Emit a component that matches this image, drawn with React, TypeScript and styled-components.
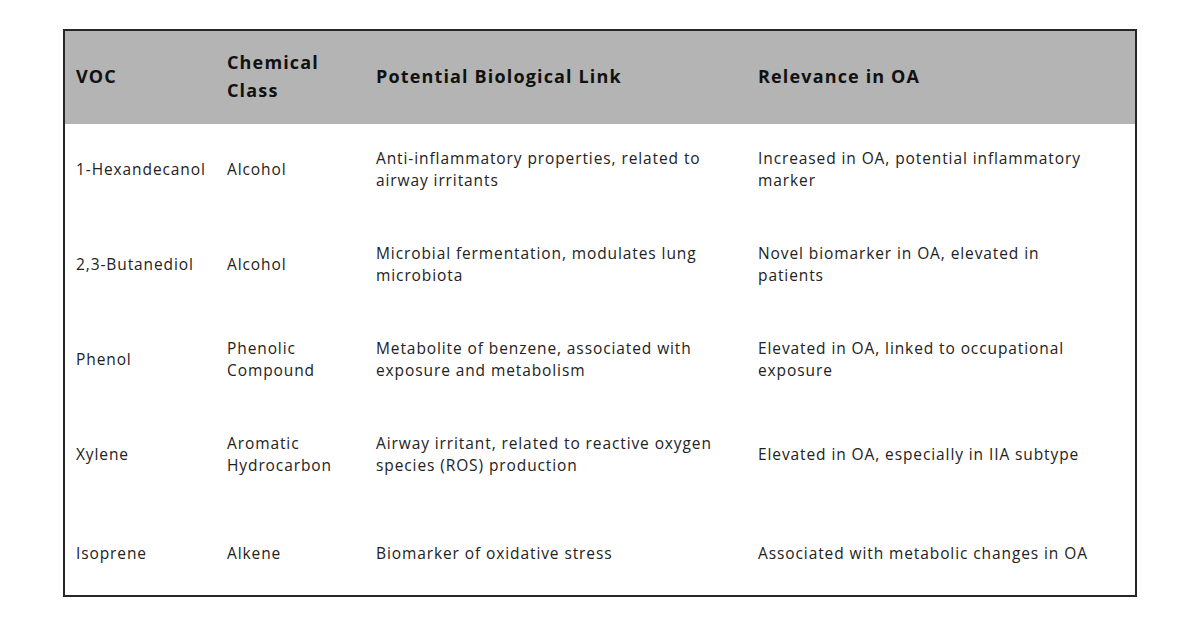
import React from "react";
import styled, { createGlobalStyle } from "styled-components";

const Global = createGlobalStyle`
  html, body { margin: 0; padding: 0; background: #ffffff; }
  body { font-family: "Open Sans", "Liberation Sans", sans-serif; }
`;

const Page = styled.div`
  width: 1200px;
  height: 627px;
  padding: 29px 0 0 63px;
  box-sizing: border-box;
  background: #ffffff;
`;

const Table = styled.table`
  width: 1074px;
  border: 2px solid #262626;
  border-collapse: collapse;
  table-layout: fixed;
`;

const Col = styled.col<{ $w: number }>`
  width: ${(p) => p.$w}px;
`;

const HeadRow = styled.tr`
  background: #b3b4b3;
  height: 94px;
`;

const Th = styled.th`
  padding: 0 10px 4px 11px;
  text-align: left;
  vertical-align: middle;
  font-size: 18px;
  font-weight: 700;
  letter-spacing: 1.15px;
  line-height: 28px;
  color: #111111;
`;

const Row = styled.tr<{ $h: number; $shift: number }>`
  height: ${(p) => p.$h}px;
  & > td {
    padding-top: ${(p) => (p.$shift > 0 ? p.$shift * 2 : 0)}px;
    padding-bottom: ${(p) => (p.$shift < 0 ? -p.$shift * 2 : 0)}px;
  }
`;

const Td = styled.td<{ $pr: number }>`
  padding-left: 11px;
  padding-right: ${(p) => p.$pr}px;
  vertical-align: middle;
  font-size: 15.5px;
  letter-spacing: 0.9px;
  line-height: 22px;
  color: #222222;
`;

const cols = [152, 149, 382, 389];
const rightPad = [0, 10, 10, 40];
const headers = ["VOC", "Chemical Class", "Potential Biological Link", "Relevance in OA"];

const rows: { h: number; s: number; cells: string[] }[] = [
  { h: 95, s: -3, cells: ["1-Hexandecanol", "Alcohol", "Anti-inflammatory properties, related to airway irritants", "Increased in OA, potential inflammatory marker"] },
  { h: 95, s: -3, cells: ["2,3-Butanediol", "Alcohol", "Microbial fermentation, modulates lung microbiota", "Novel biomarker in OA, elevated in patients"] },
  { h: 95, s: -3, cells: ["Phenol", "Phenolic Compound", "Metabolite of benzene, associated with exposure and metabolism", "Elevated in OA, linked to occupational exposure"] },
  { h: 95, s: -3, cells: ["Xylene", "Aromatic Hydrocarbon", "Airway irritant, related to reactive oxygen species (ROS) production", "Elevated in OA, especially in IIA subtype"] },
  { h: 92, s: 3, cells: ["Isoprene", "Alkene", "Biomarker of oxidative stress", "Associated with metabolic changes in OA"] },
];

export default function App() {
  return (
    <Page>
      <Global />
      <Table>
        <colgroup>
          {cols.map((w, i) => (
            <Col key={i} $w={w} />
          ))}
        </colgroup>
        <thead>
          <HeadRow>
            {headers.map((h) => (
              <Th key={h}>{h}</Th>
            ))}
          </HeadRow>
        </thead>
        <tbody>
          {rows.map((r) => (
            <Row key={r.cells[0]} $h={r.h} $shift={r.s}>
              {r.cells.map((c, i) => (
                <Td key={i} $pr={rightPad[i]}>{c}</Td>
              ))}
            </Row>
          ))}
        </tbody>
      </Table>
    </Page>
  );
}
